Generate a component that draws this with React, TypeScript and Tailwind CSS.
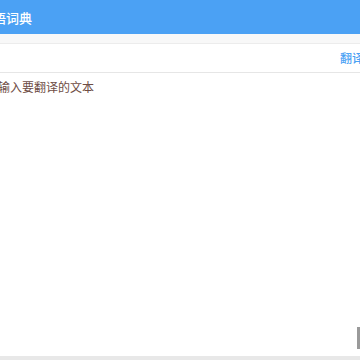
import { useState } from "react";

export default function App() {
  const [text, setText] = useState("");

  return (
    <div
      className="flex h-[360px] justify-center overflow-hidden bg-white"
      style={{ fontFamily: '"Noto Sans CJK SC", "Noto Sans", sans-serif' }}
    >
      <div className="flex w-[420px] shrink-0 flex-col">
        <header className="flex h-[34px] items-center bg-[#4ba1f4] px-[10px]">
          <h1 className="text-[13px] font-medium leading-none text-white">汉语词典</h1>
        </header>
        <div className="h-[10px] border-b border-[#ececec] bg-[#f8f8f8]" />
        <div className="flex h-[29px] items-center justify-end border-b border-[#e6e6e6] pr-[26px]">
          <button className="text-[12px] font-medium text-[#4ba1f4]">翻译</button>
        </div>
        <div className="relative flex-1 border-b-4 border-[#e8e8e8]">
          <textarea
            value={text}
            onChange={(e) => setText(e.target.value)}
            placeholder="输入要翻译的文本"
            className="h-full w-full resize-none bg-white px-[28px] py-[5px] text-[12px] text-[#5a4037] outline-none placeholder:text-[#6e4c44]"
          />
          <div className="absolute right-[30px] top-[254px] h-[22px] w-[3px] bg-[#9a9a9a]" />
        </div>
      </div>
    </div>
  );
}
